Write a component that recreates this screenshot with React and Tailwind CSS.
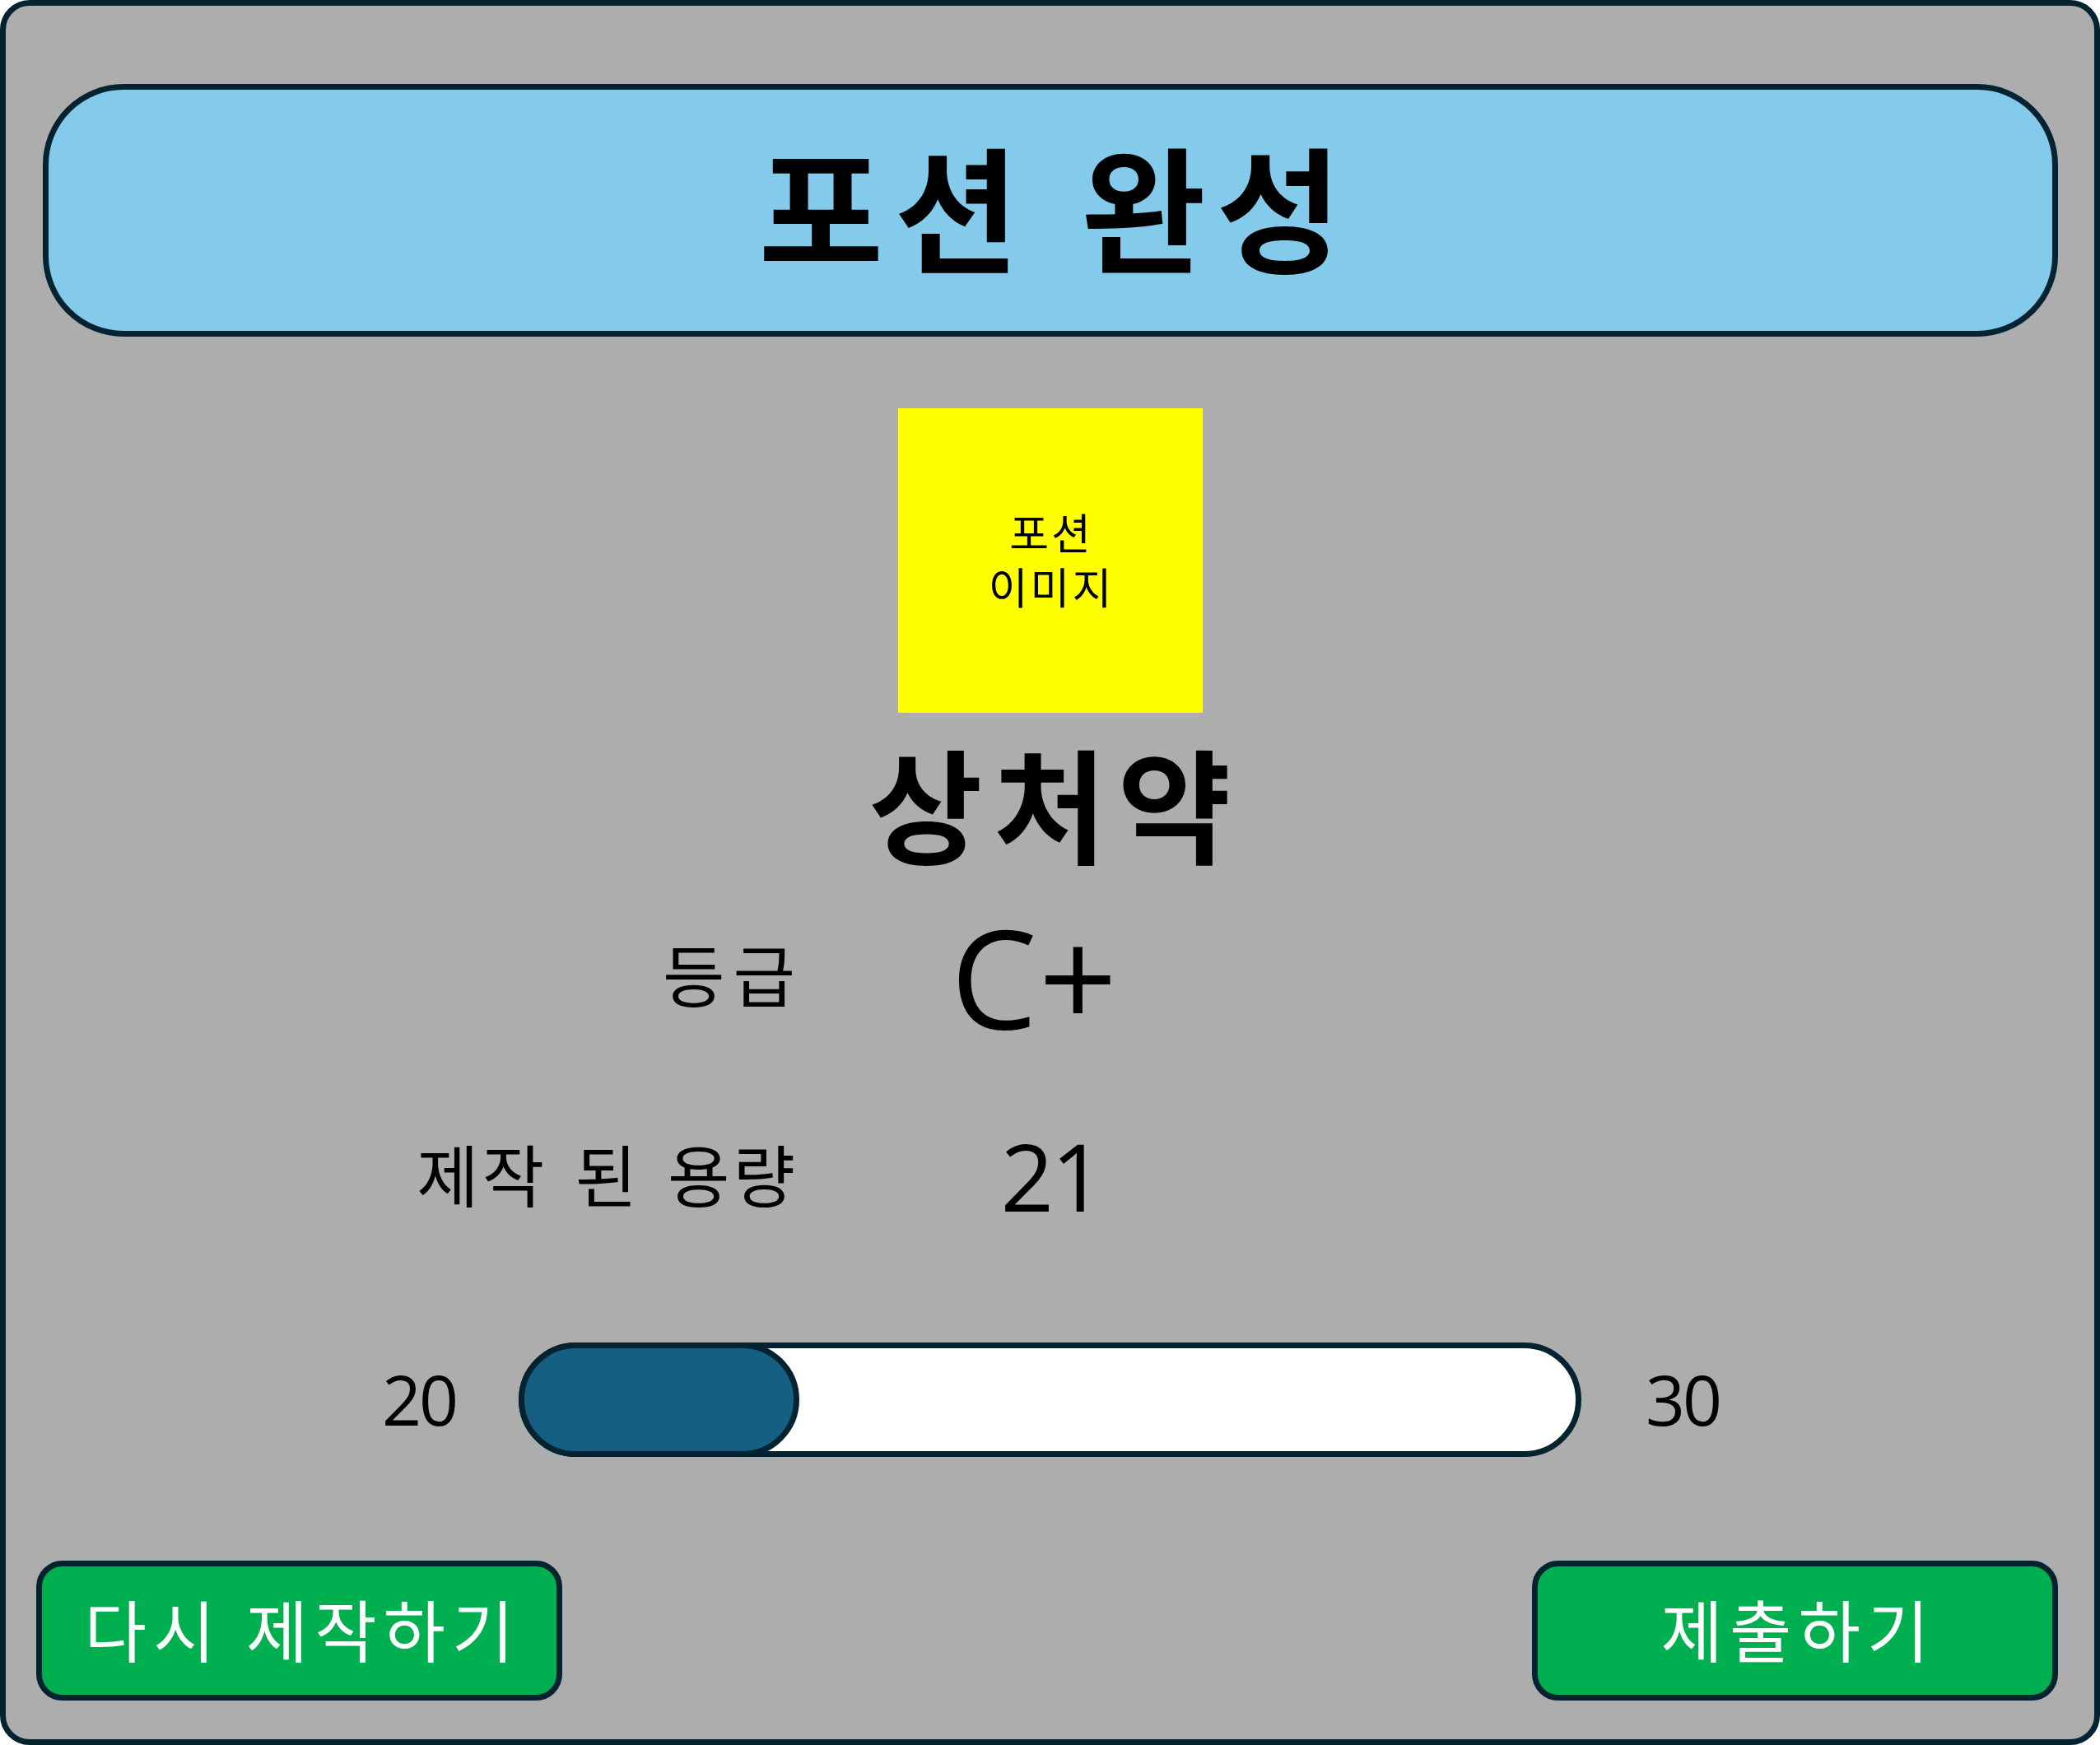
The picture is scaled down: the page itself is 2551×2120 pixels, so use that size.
import React from "react";

const FONT = { fontFamily: '"Open Sans", "Noto Sans CJK KR", "Noto Sans", sans-serif' };

export default function App() {
  return (
    <div
      style={FONT}
      className="w-[2551px] h-[2120px] border-[7px] border-[#042331] rounded-[36px] bg-[#adadad] flex flex-col items-center text-black overflow-hidden"
    >
      {/* Header */}
      <div className="mt-[95px] w-[2448px] h-[307px] shrink-0 border-[7px] border-[#042331] rounded-[98px] bg-[#83caeb] flex items-center justify-center">
        <span className="text-[165px] leading-none font-bold tracking-[13px] pl-[13px] [word-spacing:6px]">포션 완성</span>
      </div>

      {/* Image placeholder */}
      <div className="mt-[87px] w-[370px] h-[370px] shrink-0 bg-[#ffff00] flex items-center justify-center">
        <div className="text-[52px] leading-[66px] text-center tracking-[3px] pl-[3px]">
          포션
          <br />
          이미지
        </div>
      </div>

      {/* Name */}
      <div className="h-[228px] shrink-0 flex items-center justify-center">
        <span className="text-[150px] leading-none font-bold tracking-[13px] pl-[13px]">상처약</span>
      </div>

      {/* Info rows */}
      <div className="w-full grid grid-cols-[959px_600px]">
        <div className="h-[182px] flex items-center justify-end">
          <span className="text-[82px] leading-none tracking-[10px] mr-[-10px]">등급</span>
        </div>
        <div className="h-[182px] flex items-center justify-center pr-[18px]">
          <span className="text-[167px] leading-none tracking-[2px]">C+</span>
        </div>
        <div className="h-[304px] flex items-center justify-end">
          <span className="text-[82px] leading-none tracking-[4px] mr-[-4px] [word-spacing:8px]">제작 된 용량</span>
        </div>
        <div className="h-[304px] flex items-center justify-center pl-[22px]">
          <span className="text-[113px] leading-none tracking-[-3px]">21</span>
        </div>
      </div>

      {/* Progress */}
      <div className="h-[240px] shrink-0 flex items-center justify-center gap-[78px]">
        <span className="text-[84px] leading-none tracking-[-3px] w-[88px] text-right">20</span>
        <div className="relative w-[1291px] h-[139px] rounded-full bg-white border-[7px] border-[#042331]">
          <div className="absolute left-[-7px] top-[-7px] bottom-[-7px] w-[341px] rounded-full bg-[#156082] border-[7px] border-[#042331]" />
        </div>
        <span className="text-[84px] leading-none tracking-[-3px] w-[88px]">30</span>
      </div>

      {/* Buttons */}
      <div className="mt-auto mb-[47px] w-full pl-[37px] pr-[44px] flex justify-between">
        <button className="w-[639px] h-[170px] border-[7px] border-[#042331] rounded-[32px] bg-[#00b050] text-white flex items-center justify-center">
          <span className="text-[82px] leading-none tracking-[8px] pl-[8px]">다시 제작하기</span>
        </button>
        <button className="w-[639px] h-[170px] border-[7px] border-[#042331] rounded-[32px] bg-[#00b050] text-white flex items-center justify-center">
          <span className="text-[82px] leading-none tracking-[8px] pl-[8px]">제출하기</span>
        </button>
      </div>
    </div>
  );
}
